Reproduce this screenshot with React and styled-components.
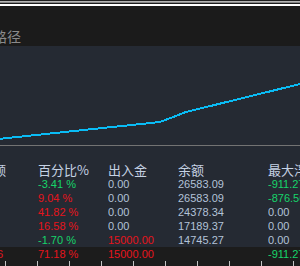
import React from "react";
import styled, { createGlobalStyle } from "styled-components";

const GlobalStyle = createGlobalStyle`
  html, body { margin: 0; padding: 0; background: #252a33; }
  body { font-family: "Liberation Sans", "Noto Sans CJK SC", sans-serif; }
`;

const Page = styled.div`
  width: 300px;
  height: 266px;
  overflow: hidden;
  display: flex;
  flex-direction: column;
  background: #252a33;
`;

const Rule = styled.div`
  flex: none;
  height: ${(p) => p.$h}px;
  background: ${(p) => p.$color};
`;

const TitleBar = styled.div`
  flex: none;
  height: 40px;
  background: #1b1b1b;
  display: flex;
  align-items: flex-end;
  overflow: hidden;
  padding-bottom: 1px;
  box-sizing: border-box;
`;

const Title = styled.span`
  margin-left: -35px;
  font-family: "Noto Sans CJK SC", sans-serif;
  font-size: 14px;
  line-height: 18px;
  color: #8a8a8a;
  white-space: nowrap;
`;

const Chart = styled.div`
  flex: none;
  height: 99px;
  background: #252a33;
  svg { display: block; }
`;

const Table = styled.div`
  flex: none;
  display: grid;
  grid-template-columns: 38px 70px 70px 90px 32px;
  grid-auto-rows: 14px;
  padding-top: 17px;
  background: #252a33;
`;

const Row = styled.div`
  display: contents;
`;

const Cell = styled.div`
  display: flex;
  align-items: center;
  justify-content: ${(p) => (p.$end ? "flex-end" : "flex-start")};
  padding-right: ${(p) => p.$pr || 0}px;
  overflow: hidden;
  white-space: nowrap;
  font-size: 11px;
  line-height: 14px;
  background: ${(p) => (p.$dark ? "#1c1c1c" : "transparent")};
  color: ${(p) =>
    p.$tone === "up" ? "#e6141c" : p.$tone === "down" ? "#16d46a" : "#b3c2d8"};
`;

const Head = styled(Cell)`
  font-family: "Noto Sans CJK SC", sans-serif;
  font-size: 13px;
  color: #c6d2e4;
`;

const Ticks = styled.div`
  flex: 1;
  background: #1c1c1c;
  display: flex;
  gap: 31px;
  padding-left: 5px;
  align-items: flex-end;
  margin-top: -1px;
`;

const Tick = styled.span`
  flex: none;
  width: 1px;
  height: 5px;
  background: #c4c4c4;
`;

const rows = [
  { a: "", p: ["-3.41 %", "down"], f: ["0.00"], b: "26583.09", m: ["-911.27", "down"] },
  { a: "", p: ["9.04 %", "up"], f: ["0.00"], b: "26583.09", m: ["-876.56", "down"] },
  { a: "", p: ["41.82 %", "up"], f: ["0.00"], b: "24378.34", m: ["0.00"] },
  { a: "", p: ["16.58 %", "up"], f: ["0.00"], b: "17189.37", m: ["0.00"] },
  { a: "", p: ["-1.70 %", "down"], f: ["15000.00", "up"], b: "14745.27", m: ["0.00"] },
];

export default function App() {
  return (
    <>
      <GlobalStyle />
      <Page>
        <Rule $h={1} $color="#1e1e1e" />
        <Rule $h={1} $color="#b4b4b4" />
        <Rule $h={1} $color="#858585" />
        <Rule $h={1} $color="#1b1b1b" />
        <Rule $h={2} $color="#ffffff" />
        <TitleBar>
          <Title>资金路径</Title>
        </TitleBar>
        <Chart>
          <svg width="300" height="99" viewBox="0 0 300 99">
            <polyline
              points="-2,93 160,76 172,71.5 186,66 300,38"
              fill="none"
              stroke="#0abcf5"
              strokeWidth="2"
              shapeRendering="crispEdges"
            />
          </svg>
        </Chart>
        <Rule $h={1} $color="#737373" />
        <Table>
          <Row>
            <Head $end $pr={32}>净额</Head>
            <Head>百分比%</Head>
            <Head>出入金</Head>
            <Head>余额</Head>
            <Head>最大浮亏</Head>
          </Row>
          {rows.map((r, i) => (
            <Row key={i}>
              <Cell />
              <Cell $tone={r.p[1]}>{r.p[0]}</Cell>
              <Cell $tone={r.f[1]}>{r.f[0]}</Cell>
              <Cell>{r.b}</Cell>
              <Cell $tone={r.m[1]}>{r.m[0]}</Cell>
            </Row>
          ))}
          <Row>
            <Cell $dark $end $pr={35} $tone="up">5386.56</Cell>
            <Cell $dark $tone="up">71.18 %</Cell>
            <Cell $dark $tone="up">15000.00</Cell>
            <Cell $dark />
            <Cell $dark $tone="down">-911.27</Cell>
          </Row>
        </Table>
        <Ticks>
          {Array.from({ length: 10 }).map((_, i) => (
            <Tick key={i} />
          ))}
        </Ticks>
      </Page>
    </>
  );
}
